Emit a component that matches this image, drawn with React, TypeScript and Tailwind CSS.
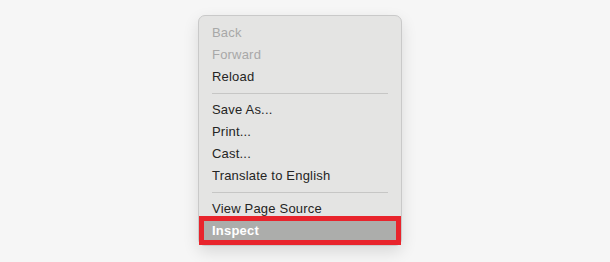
import React from "react";

type Item = { label: string; disabled?: boolean } | "sep";

const items: Item[] = [
  { label: "Back", disabled: true },
  { label: "Forward", disabled: true },
  { label: "Reload" },
  "sep",
  { label: "Save As..." },
  { label: "Print..." },
  { label: "Cast..." },
  { label: "Translate to English" },
  "sep",
  { label: "View Page Source" },
];

export default function App() {
  return (
    <div className="w-[610px] h-[262px] bg-[#f6f6f6] pt-[15px] pl-[198px] overflow-hidden font-['Liberation_Sans',Arial,sans-serif] text-[13px] tracking-[0.2px]">
      <div className="w-[204px] bg-[#e4e4e3] border border-[#c9c9c9] rounded-[7px] shadow-[0_6px_16px_rgba(0,0,0,0.12)] pt-[6px] pb-0">
        {items.map((item, i) =>
          item === "sep" ? (
            <div key={i} className="h-[11px] flex items-center px-[13px]">
              <div className="h-px w-full bg-[#c6c6c5]" />
            </div>
          ) : (
            <div
              key={i}
              className={`h-[22px] flex items-center pl-[13px] ${
                item.disabled ? "text-[#a8a8a8]" : "text-[#242424]"
              }`}
            >
              {item.label}
            </div>
          )
        )}
        {/* highlighted row */}
        <div className="-mt-[4px] h-[29px] border-[5px] border-[#e8242c] bg-[#acadab] flex items-center pl-[8px] text-white font-bold">
          Inspect
        </div>
      </div>
    </div>
  );
}
